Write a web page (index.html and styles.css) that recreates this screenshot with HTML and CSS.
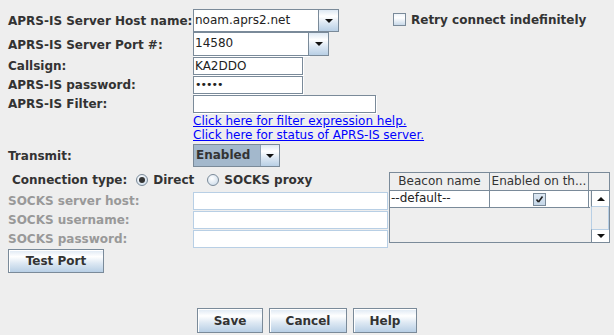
FILE: index.html
```html
<!DOCTYPE html>
<html lang="en">
<head>
    <meta charset="UTF-8">
    <title>APRS-IS</title>
    <link rel="stylesheet" href="styles.css">
</head>
<body>
    <div class="dialog">
        <!-- Servidor APRS-IS -->
        <div class="top">
            <div class="row row-host">
                <span class="lbl">APRS-IS Server Host name:</span>
                <div class="combo combo-host">
                    <span class="field combo-field">noam.aprs2.net</span>
                    <span class="arrow-btn"><i class="tri"></i></span>
                </div>
                <span class="check retry"><span class="box"></span>Retry connect indefinitely</span>
            </div>
            <div class="row row-port">
                <span class="lbl">APRS-IS Server Port #:</span>
                <div class="combo combo-port">
                    <span class="field combo-field">14580</span>
                    <span class="arrow-btn"><i class="tri"></i></span>
                </div>
            </div>
            <div class="row row-small">
                <span class="lbl">Callsign:</span>
                <span class="field short">KA2DDO</span>
            </div>
            <div class="row row-small">
                <span class="lbl">APRS-IS password:</span>
                <span class="field short pw">•••••</span>
            </div>
            <div class="row row-small">
                <span class="lbl">APRS-IS Filter:</span>
                <span class="field filter"></span>
            </div>
            <div class="links">
                <a href="#">Click here for filter expression help.</a>
                <a href="#">Click here for status of APRS-IS server.</a>
            </div>
            <div class="row row-transmit">
                <span class="lbl">Transmit:</span>
                <div class="combo combo-transmit">
                    <span class="combo-value">Enabled</span>
                    <span class="arrow-btn"><i class="tri"></i></span>
                </div>
            </div>
        </div>

        <!-- Conexão e beacons -->
        <div class="lower">
            <div class="left">
                <div class="conn-row">
                    <span class="lbl">Connection type:</span>
                    <span class="radio radio-direct on"></span><span class="lbl radio-text">Direct</span>
                    <span class="radio"></span><span class="lbl radio-text">SOCKS proxy</span>
                </div>
                <div class="socks-row">
                    <span class="lbl disabled">SOCKS server host:</span>
                    <span class="field socks"></span>
                </div>
                <div class="socks-row">
                    <span class="lbl disabled">SOCKS username:</span>
                    <span class="field socks"></span>
                </div>
                <div class="socks-row">
                    <span class="lbl disabled">SOCKS password:</span>
                    <span class="field socks"></span>
                </div>
                <button class="btn test-btn">Test Port</button>
            </div>

            <div class="pane">
                <div class="thead">
                    <span class="th th-name">Beacon name</span>
                    <span class="th th-enabled">Enabled on th...</span>
                </div>
                <div class="corner"></div>
                <div class="tbody">
                    <div class="tr">
                        <span class="td td-name">--default--</span>
                        <span class="td td-enabled">
                            <span class="cell-check">
                                <svg width="9" height="9" viewBox="0 0 9 9"><path d="M1.5 4.5 L3.5 7 M3.5 7 L7.5 1.5" stroke="#222" stroke-width="1.6" fill="none"/></svg>
                            </span>
                        </span>
                    </div>
                </div>
                <div class="vscroll">
                    <span class="sb-btn sb-up"><i class="tri up"></i></span>
                    <span class="sb-track"></span>
                    <span class="sb-btn sb-down"><i class="tri"></i></span>
                </div>
            </div>
        </div>

        <!-- Botões -->
        <div class="buttons">
            <button class="btn btn-save">Save</button>
            <button class="btn btn-cancel">Cancel</button>
            <button class="btn btn-help">Help</button>
        </div>
    </div>
</body>
</html>
```

FILE: styles.css
```css
/* Configurações gerais */
body { margin: 0; background: #eeeeee; font-family: "DejaVu Sans", sans-serif; font-size: 12px; color: #333333; }
.dialog { width: 614px; height: 335px; display: flex; flex-direction: column; box-sizing: border-box; padding-bottom: 2px; }

/* Rótulos */
.lbl { font-weight: bold; white-space: nowrap; }
.lbl.disabled { color: #999999; }

/* Linhas de cima */
.top { padding: 9px 0 0 8px; }
.row { display: flex; align-items: center; }
.row > .lbl:first-child { width: 185px; }
.row-host { height: 23px; }
.row-port { height: 25px; align-items: flex-start; }
.row-port .lbl { align-self: center; }
.row-small { height: 19px; align-items: flex-start; }
.row-small .lbl { line-height: 18px; }
.row-transmit { height: 23px; margin-top: 2px; }

/* Campos de texto */
.field { display: block; box-sizing: border-box; height: 18px; border: 1px solid #7a8a99; box-shadow: 1px 1px 0 #ffffff; background: #ffffff; padding-left: 1px; line-height: 16px; color: #222; white-space: nowrap; }
.field.short { width: 110px; }
.field.pw { letter-spacing: -1px; font-size: 11px; }
.field.filter { width: 183px; }
.field.socks { width: 195px; border-color: #b8cfe5; box-shadow: none; }

/* Combos */
.combo { display: flex; box-sizing: border-box; }
.combo-host { width: 146px; height: 23px; }
.combo-port { width: 136px; height: 24px; }
.combo-field { flex: 1; height: 100%; line-height: 20px; }
.arrow-btn { width: 20px; box-sizing: border-box; border: 1px solid #7a8a99; border-left: none; display: flex; align-items: center; justify-content: center; background: linear-gradient(#dde8f3 0%, #ffffff 30%, #dde8f3 60%, #b8cfe5 100%); }
.combo-transmit { width: 87px; height: 23px; border: 1px solid #7a8a99; }
.combo-value { flex: 1; background: #a3b8cc; font-weight: bold; line-height: 21px; padding-left: 2px; border-right: 1px solid #8da0b3; }
.combo-transmit .arrow-btn { border: none; width: 18px; }
.tri { display: block; width: 0; height: 0; border-left: 4px solid transparent; border-right: 4px solid transparent; border-top: 4px solid #111; }
.tri.up { border-top: none; border-bottom: 4px solid #111; }

/* Checkbox e rádio */
.check { display: flex; align-items: center; font-weight: bold; }
.retry { margin-left: 54px; margin-top: -2px; }
.box { width: 13px; height: 13px; box-sizing: border-box; border: 1px solid #7a8a99; background: linear-gradient(#eef3f8, #ffffff 35%, #c9d9e9); margin-right: 5px; }
.radio { width: 12px; height: 12px; box-sizing: border-box; border: 1px solid #7a8a99; border-radius: 50%; background: radial-gradient(circle at 40% 35%, #ffffff, #c5d6e7); margin-right: 5px; display: inline-flex; align-items: center; justify-content: center; }
.radio.on::after { content: ""; width: 6px; height: 6px; border-radius: 50%; background: #333; }

/* Links */
.links { display: flex; flex-direction: column; padding-left: 185px; }
.links a { color: #0000ff; line-height: 14px; }

/* Parte de baixo */
.lower { display: flex; }
.left { width: 389px; }
.conn-row { height: 25px; display: flex; align-items: center; padding-left: 12px; }
.radio-direct { margin-left: 9px; }
.radio-text { margin-right: 13px; }
.socks-row { display: flex; padding-left: 8px; height: 19px; }
.socks-row .lbl { width: 185px; line-height: 18px; }

/* Botões */
.btn { font-family: "DejaVu Sans", sans-serif; font-size: 12px; font-weight: bold; color: #333; border: 1px solid #7a8a99; box-shadow: inset 1px 1px 0 #ffffff; background: linear-gradient(#dde8f3 0%, #ffffff 30%, #dde8f3 60%, #b8cfe5 100%); padding: 0; height: 24px; }
.test-btn { margin-left: 8px; width: 96px; }
.buttons { margin-top: auto; display: flex; justify-content: center; gap: 6px; }
.buttons .btn { height: 25px; }
.btn-save { width: 66px; }
.btn-cancel { width: 78px; }
.btn-help { width: 64px; }

/* Tabela de beacons */
.pane { margin-top: 5px; width: 221px; height: 71px; box-sizing: border-box; border: 1px solid #7a8a99; display: grid; grid-template-columns: 200px 1fr; grid-template-rows: 18px 1fr; }
.thead { display: flex; border-bottom: 1px solid #7a8a99; box-sizing: border-box; }
.th { box-sizing: border-box; border-right: 1px solid #7a8a99; text-align: center; line-height: 17px; white-space: nowrap; overflow: hidden; }
.th-name { width: 100px; }
.th-enabled { width: 99px; }
.corner { border-bottom: 1px solid #7a8a99; }
.tbody { background: #eeeeee; }
.tr { display: flex; height: 16px; background: #ffffff; border-bottom: 1px solid #7a8a99; }
.td { box-sizing: border-box; border-right: 1px solid #7a8a99; line-height: 15px; color: #222; }
.td-name { width: 100px; padding-left: 1px; }
.td-enabled { width: 99px; display: flex; align-items: center; justify-content: center; }
.cell-check { width: 13px; height: 13px; box-sizing: border-box; border: 1px solid #7a8a99; background: linear-gradient(#dde8f3, #c5d6e7); display: flex; align-items: center; justify-content: center; }

/* Barra de rolagem */
.vscroll { display: flex; flex-direction: column; padding-left: 1px; }
.sb-btn { display: flex; align-items: center; justify-content: center; background: #ffffff; border-left: 1px solid #7a8a99; }
.sb-up { height: 15px; border-bottom: 1px solid #b8cfe5; }
.sb-down { height: 12px; border-top: 1px solid #b8cfe5; }
.sb-track { flex: 1; background: #eeeeee; border-left: 1px solid #b8cfe5; border-right: 1px solid #b8cfe5; }
```
